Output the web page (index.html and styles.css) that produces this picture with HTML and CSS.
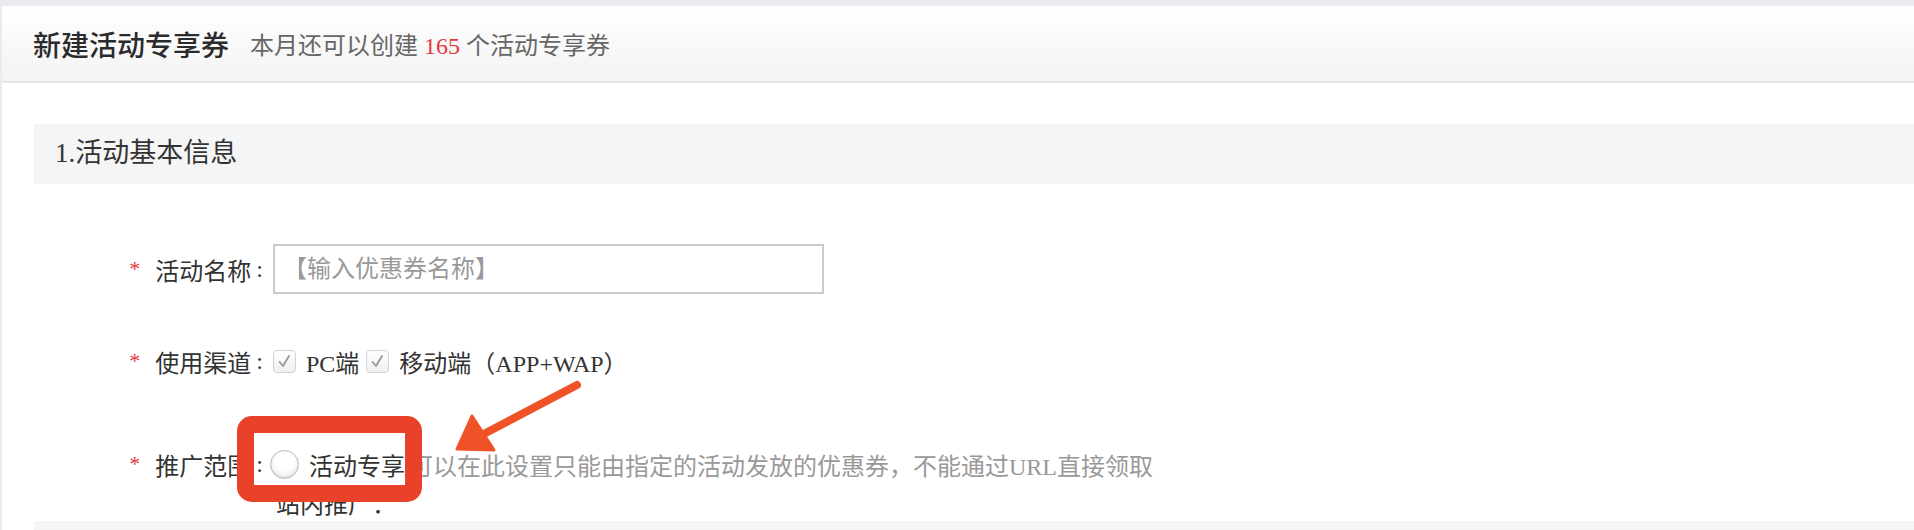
FILE: index.html
```html
<!DOCTYPE html>
<html lang="zh-CN">
<head>
  <meta charset="UTF-8">
  <meta name="viewport" content="width=device-width, initial-scale=1.0">
  <title>新建活动专享券</title>
  <link rel="stylesheet" href="styles.css">
</head>
<body>

  <div id="page">
    <div class="head">
      <h1>新建活动专享券</h1>
      <span class="quota">本月还可以创建 <em>165</em> 个活动专享券</span>
    </div>

    <div class="content">
      <div class="sec-title">1.活动基本信息</div>

      <div class="form">
        <div class="row row-name">
          <label class="lbl"><i>*</i>活动名称<b>:</b></label>
          <input type="text" class="txt" placeholder="【输入优惠券名称】">
        </div>

        <div class="row row-channel">
          <label class="lbl"><i>*</i>使用渠道<b>:</b></label>
          <span class="chk">
            <svg viewBox="0 0 23 23" width="23" height="23"><path d="M6.5 12 L10 16 L16 6" fill="none" stroke="#999" stroke-width="1.8" stroke-linecap="round" stroke-linejoin="round"/></svg>
          </span>
          <span class="opt">PC端</span>
          <span class="chk">
            <svg viewBox="0 0 23 23" width="23" height="23"><path d="M6.5 12 L10 16 L16 6" fill="none" stroke="#999" stroke-width="1.8" stroke-linecap="round" stroke-linejoin="round"/></svg>
          </span>
          <span class="opt">移动端（APP+WAP）</span>
        </div>

        <div class="row row-scope">
          <label class="lbl"><i>*</i>推广范围<b>:</b></label>
          <span class="radio"></span>
          <span class="opt">活动专享</span>
          <span class="hint">可以在此设置只能由指定的活动发放的优惠券，不能通过URL直接领取</span>
        </div>

        <div class="row row-sub">
          <span class="sub">站内推广：</span>
        </div>
      </div>

      <div class="sec-title next"></div>
    </div>

    <!-- annotation drawn over the screenshot -->
    <div class="mark"></div>
    <svg class="arrow" width="1914" height="530" viewBox="0 0 1914 530">
      <path d="M577 385 L478 437" stroke="#ef5227" stroke-width="8" stroke-linecap="round" fill="none"/>
      <polygon points="457,449 472,416 494,450" fill="#ef5227" stroke="#ef5227" stroke-width="3" stroke-linejoin="round"/>
    </svg>
  </div>

</body>
</html>
```

FILE: styles.css
```css
html, body {
  margin: 0;
  padding: 0;
}

body {
  background: #ebebef;
  font-family: "Liberation Serif", "Noto Sans CJK SC", serif;
  color: #333;
}

#page {
  position: relative;
  height: 530px;
  padding: 6px 0 0 2px;
  box-sizing: border-box;
  overflow: hidden;
}

.head {
  display: flex;
  align-items: center;
  height: 75px;
  padding-left: 31px;
  background: linear-gradient(#ffffff, #f3f3f3);
  border-bottom: 2px solid #e6e6e6;
}

.head h1 {
  margin: 0;
  font-size: 28px;
  font-weight: 500;
  color: #2b2b2b;
}

.quota {
  margin-left: 21px;
  font-size: 24px;
  color: #666;
}

.quota em {
  font-style: normal;
  color: #e4393c;
}

.content {
  background: #fff;
  padding: 41px 0 0 32px;
}

.sec-title {
  height: 60px;
  line-height: 58px;
  padding-left: 21px;
  background: #f5f5f5;
  font-size: 27px;
  color: #333;
}

.sec-title.next {
  margin-top: 4px;
  height: 20px;
}

.form {
  font-size: 24px;
}

.row {
  display: flex;
  align-items: center;
  height: 30px;
}

.row-name {
  height: 50px;
  margin-top: 60px;
}

.row-channel {
  margin-top: 52px;
}

.row-scope {
  margin-top: 73px;
}

.row-sub {
  margin-top: 8px;
  padding-left: 242px;
}

.lbl {
  display: flex;
  align-items: center;
  flex-shrink: 0;
  width: 229px;
  justify-content: flex-end;
  padding-right: 6px;
  color: #333;
}

.lbl i {
  font-style: normal;
  color: #e4393c;
  font-size: 22px;
  margin-right: 15px;
}

.lbl b {
  font-weight: normal;
  padding-left: 5px;
}

.txt {
  box-sizing: border-box;
  width: 551px;
  height: 50px;
  margin-left: 4px;
  padding: 0 8px;
  border: 2px solid #cacaca;
  font-family: inherit;
  font-size: 24px;
  outline: none;
}

.txt::placeholder {
  color: #999;
}

.chk {
  box-sizing: border-box;
  flex-shrink: 0;
  width: 23px;
  height: 23px;
  margin-left: 4px;
  border: 1px solid #d2d2d2;
  border-radius: 4px;
  background: linear-gradient(#ffffff, #f0f0f0);
  display: flex;
}

.chk svg {
  margin: -1px;
}

.opt {
  margin-left: 10px;
  color: #333;
}

.row-channel .opt {
  margin-left: 10px;
  margin-right: 3px;
}

.radio {
  box-sizing: border-box;
  flex-shrink: 0;
  width: 29px;
  height: 29px;
  margin-left: 1px;
  border-radius: 50%;
  border: 1px solid #b9b9b9;
  background: radial-gradient(circle at 50% 35%, #ffffff 40%, #e4e4e4 100%);
  box-shadow: inset 0 -1px 2px rgba(0, 0, 0, 0.12);
}

.row-scope .opt {
  margin-left: 10px;
}

.hint {
  margin-left: 4px;
  color: #999;
  white-space: nowrap;
}

.sub {
  color: #333;
}

.mark {
  position: absolute;
  left: 237px;
  top: 416px;
  width: 185px;
  height: 86px;
  box-sizing: border-box;
  border: 17px solid #e9412a;
  border-radius: 15px;
}

.arrow {
  position: absolute;
  left: 0;
  top: 0;
  pointer-events: none;
}
```
